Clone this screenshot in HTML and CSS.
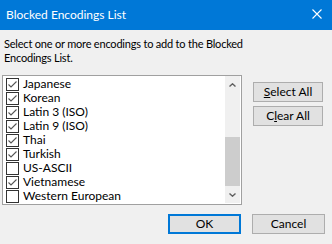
FILE: index.html
```html
<!DOCTYPE html>
<html lang="en">
<head>
    <meta charset="UTF-8">
    <meta name="viewport" content="width=device-width, initial-scale=1.0">
    <title>Blocked Encodings List</title>
    <link rel="stylesheet" href="styles.css">
</head>
<body>
    <div class="dialog">
        <div class="titlebar">
            <span class="title">Blocked Encodings List</span>
            <svg class="close" width="10" height="10" viewBox="0 0 10 10">
                <path d="M0.5 0.5 L9.5 9.5 M9.5 0.5 L0.5 9.5" stroke="#fff" stroke-width="1.1" fill="none"/>
            </svg>
        </div>
        <div class="content">
            <p class="prompt">Select one or more encodings to add to the Blocked<br>Encodings List.</p>
            <div class="main">
                <div class="listbox">
                    <ul class="items">
                        <li><span class="check on"></span>Japanese</li>
                        <li><span class="check on"></span>Korean</li>
                        <li><span class="check on"></span>Latin 3 (ISO)</li>
                        <li><span class="check on"></span>Latin 9 (ISO)</li>
                        <li><span class="check on"></span>Thai</li>
                        <li><span class="check on"></span>Turkish</li>
                        <li><span class="check"></span>US-ASCII</li>
                        <li><span class="check on"></span>Vietnamese</li>
                        <li><span class="check"></span>Western European</li>
                    </ul>
                    <div class="scrollbar">
                        <div class="arrow">
                            <svg width="7" height="4" viewBox="0 0 7 4"><path d="M0.5 3.5 L3.5 0.8 L6.5 3.5" stroke="#606060" stroke-width="1.4" fill="none"/></svg>
                        </div>
                        <div class="track">
                            <div class="thumb"></div>
                        </div>
                        <div class="arrow">
                            <svg width="7" height="4" viewBox="0 0 7 4"><path d="M0.5 0.5 L3.5 3.2 L6.5 0.5" stroke="#606060" stroke-width="1.4" fill="none"/></svg>
                        </div>
                    </div>
                </div>
                <div class="side-buttons">
                    <button class="btn side"><u>S</u>elect All</button>
                    <button class="btn side">C<u>l</u>ear All</button>
                </div>
            </div>
            <div class="footer">
                <button class="btn default">OK</button>
                <button class="btn">Cancel</button>
            </div>
        </div>
    </div>
</body>
</html>
```

FILE: styles.css
```css
body {
    margin: 0;
    padding: 0;
    font-family: Lato, "Liberation Sans", sans-serif;
    font-size: 12px;
    color: #000;
    background: #f0f0f0;
}
.dialog {
    width: 332px;
    height: 244px;
    display: flex;
    flex-direction: column;
    background: #f0f0f0;
}
.titlebar {
    height: 30px;
    background: #0078d7;
    color: #fff;
    display: flex;
    align-items: center;
    justify-content: space-between;
    padding: 0 10px 0 6px;
    flex-shrink: 0;
}
.title {
    font-size: 12px;
    margin-top: -1px;
}
.close {
    display: block;
    margin-top: -2px;
}
.content {
    display: flex;
    flex-direction: column;
}
.prompt {
    margin: 7px 0 0 4px;
    font-size: 11px;
    letter-spacing: -0.2px;
    line-height: 14px;
}
.main {
    display: flex;
    margin-top: 10px;
    padding-left: 2px;
}
.listbox {
    width: 240px;
    height: 130px;
    box-sizing: border-box;
    border: 1px solid #a0a0a0;
    background: #fff;
    display: flex;
}
.items {
    list-style: none;
    margin: 1px 0 0;
    padding: 0;
    flex-grow: 1;
}
.items li {
    height: 14px;
    display: flex;
    align-items: center;
    padding-left: 3px;
    line-height: 14px;
}
.check {
    width: 13px;
    height: 13px;
    box-sizing: border-box;
    border: 1px solid #333;
    margin-right: 4px;
    flex-shrink: 0;
    background: #fff;
}
.check.on {
    background: url("data:image/svg+xml,%3Csvg xmlns='http://www.w3.org/2000/svg' width='11' height='11'%3E%3Cpath d='M1.5 5.5 L4 8 L9.5 2.5' stroke='%23555' stroke-width='1.1' fill='none'/%3E%3C/svg%3E") no-repeat center #fff;
}
.scrollbar {
    width: 15px;
    margin: 0 1px 1px 0;
    background: #f0f0f0;
    display: flex;
    flex-direction: column;
}
.arrow {
    height: 17px;
    display: flex;
    align-items: center;
    justify-content: center;
}
.track {
    flex-grow: 1;
    padding-top: 44px;
}
.thumb {
    height: 49px;
    background: #cdcdcd;
}
.side-buttons {
    display: flex;
    flex-direction: column;
    gap: 4px;
    margin: 7px 0 0 11px;
}
.btn {
    font-family: inherit;
    font-size: 12px;
    color: #000;
    background: #e1e1e1;
    border: 1px solid #adadad;
    height: 20px;
    width: 73px;
    padding: 0;
    line-height: 16px;
}
.btn.side {
    width: 70px;
}
.btn.default {
    border: 2px solid #0078d7;
}
.footer {
    display: flex;
    justify-content: flex-end;
    gap: 11px;
    margin-top: 9px;
    padding-right: 7px;
}
```
